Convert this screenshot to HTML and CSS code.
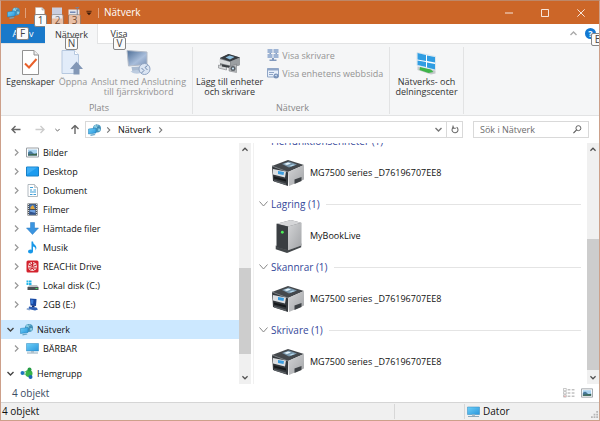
FILE: index.html
```
<!DOCTYPE html>
<html lang="sv">
<head>
<meta charset="utf-8">
<title>Nätverk</title>
<link rel="stylesheet" href="styles.css">
</head>
<body>
<svg class="defs" aria-hidden="true">
  <defs>
    <linearGradient id="g-screen" x1="0" y1="0" x2="1" y2="1"><stop offset="0" stop-color="#6fd0f8"/><stop offset="1" stop-color="#2a96dc"/></linearGradient>
    <linearGradient id="g-side" x1="0" y1="0" x2="1" y2="1"><stop offset="0" stop-color="#d3d4d6"/><stop offset="1" stop-color="#a2a4a7"/></linearGradient>
    <linearGradient id="g-fade" x1="0" y1="0" x2="1" y2="1"><stop offset="0" stop-color="#4c6d96"/><stop offset=".6" stop-color="#a9bedb"/><stop offset="1" stop-color="#7890b4"/></linearGradient>
    <symbol id="net" viewBox="0 0 26 24">
      <circle cx="18" cy="9" r="8" fill="#4795bd"/><path d="M12 4q5-4 9-1l-3 5-5 1zM21 8l4 1-2 6-3-2z" fill="#8dd0e6"/><path d="M17 1l2 6 6 2" stroke="#2a668e" fill="none"/>
      <path d="M1 10l15-2v10L1 20z" fill="url(#g-screen)" stroke="#187bb5"/><path d="M5 21l8-1 2 2-10 2z" fill="#67a6c8"/>
    </symbol>
    <symbol id="printer" viewBox="0 0 34 28">
      <path d="M1 7L17 1l16 5-16 7z" fill="#44484c"/>
      <path d="M1 7l16 6v14L2 22z" fill="#34383c"/>
      <path d="M17 13l16-7v14.500L18 27z" fill="url(#g-side)"/>
      <path d="M11 5l7-2.500 8 3-8 3z" fill="#7795aa"/><path d="M13 5l4-1.500 3 1-4 1.500z" fill="#e4f3fb"/><path d="M18 7l4-1.500 2 .5-4 1.500z" fill="#b9dcf0"/>
      <path d="M1 7l16 6" stroke="#73787c" fill="none"/>
      <path d="M2 10l13 2.500-1 6L2 15.500z" fill="#dcdfe2"/><path d="M7 12l6 1-.5 3L7 15z" fill="#3a9de0"/>
      <path d="M3 17.500l12 3v2l-12-3z" fill="#15181b"/><path d="M3 21l12 3.500V26L3 22.500z" fill="#5c6165"/>
      <path d="M23.500 20.500l7-2.500v4l-7 3z" fill="#3e4246"/>
    </symbol>
    <symbol id="monitor" viewBox="0 0 26 24">
      <path d="M1 2h24v15H1z" fill="url(#g-screen)" stroke="#2a87bf"/><path d="M10 17h6v3h-6z" fill="#a9bcc8"/><path d="M2 20h22v2H2z" fill="#8ca8ba"/>
    </symbol>
    <symbol id="picture" viewBox="0 0 26 20">
      <path d="M1 1h24v18H1z" fill="#fff" stroke="#9a9fa4" stroke-width="2"/><path d="M4 4h18v12H4z" fill="#a9d3f0"/><path d="M4 10q5-5 9 0t9 1v5H4z" fill="#49799a"/><path d="M4 14l18-2v4H4z" fill="#3b654b"/>
    </symbol>
    <symbol id="right" viewBox="0 0 10 14"><path d="M2 1l6 6-6 6" fill="none" stroke="currentColor" stroke-width="2.5"/></symbol>
    <symbol id="down" viewBox="0 0 14 10"><path d="M1 2l6 6 6-6" fill="none" stroke="currentColor" stroke-width="2.8"/></symbol>
    <symbol id="thin" viewBox="0 0 18 12"><path d="M1 1l8 9 8-9" fill="none" stroke="currentColor" stroke-width="2"/></symbol>
    <symbol id="up" viewBox="0 0 14 10"><path d="M1 8l6-6 6 6" fill="none" stroke="currentColor" stroke-width="2.8"/></symbol>
    <symbol id="arrow" viewBox="0 0 20 18"><path d="M19 9H2M9 2L2 9l7 7" fill="none" stroke="currentColor" stroke-width="2.8"/></symbol>
  </defs>
</svg>
<div class="window">
  <header class="titlebar">
    <svg class="app-icon"><use href="#net"/></svg>
    <span class="bar"></span>
    <div class="quick">
      <button class="quick-btn" aria-label="Egenskaper"><svg viewBox="0 0 24 24"><path d="M3 1h13l5 5v17H3z" fill="#fff" stroke="#bbb"/><path d="M16 1v5h5" fill="#ddd" stroke="#888"/></svg><kbd class="tip">1</kbd></button>
      <button class="quick-btn off" aria-label="Ny mapp"><svg viewBox="0 0 24 24"><path d="M2 1h20v22H2z" fill="#c9cee0"/></svg><kbd class="tip">2</kbd></button>
      <button class="quick-btn off" aria-label="Byt namn"><svg viewBox="0 0 24 24"><path d="M1 5h22v11H1z" fill="#e2e5ec"/><path d="M4 9h11v3H4z" fill="#7589b4"/><path d="M15 1h7M18.500 1v17" stroke="#7c7e91" stroke-width="2"/></svg><kbd class="tip">3</kbd></button>
      <button class="quick-more" aria-label="Anpassa"><svg viewBox="0 0 14 14"><path d="M1 3h12" stroke="#3a1a08" stroke-width="2"/><path d="M1 6h12l-6 6z" fill="#3a1a08"/></svg></button>
    </div>
    <span class="bar"></span>
    <h1>Nätverk</h1>
    <div class="controls">
      <button aria-label="Minimera"><svg viewBox="0 0 24 24"><path d="M0 12h24" stroke="#fff" stroke-width="2.500"/></svg></button>
      <button aria-label="Maximera"><svg viewBox="0 0 24 24"><path d="M1.500 1.500h21v21h-21z" fill="none" stroke="#fff" stroke-width="2.500"/></svg></button>
      <button aria-label="Stäng"><svg viewBox="0 0 24 24"><path d="M1 1l22 22M23 1L1 23" stroke="#fff" stroke-width="2.500"/></svg></button>
    </div>
  </header>
  <nav class="tabs">
    <button class="tab file">Arkiv<kbd class="tip tip-file">F</kbd></button>
    <button class="tab active">Nätverk<kbd class="tip tip-tab">N</kbd></button>
    <button class="tab">Visa<kbd class="tip tip-tab">V</kbd></button>
    <button class="fold" aria-label="Minimera menyfliksområdet"><svg><use href="#up"/></svg></button>
    <button class="help" aria-label="Hjälp">?<kbd class="tip tip-help">E</kbd></button>
  </nav>
  <section class="ribbon">
    <div class="group places">
      <div class="tools">
        <button class="tool"><svg viewBox="0 0 34 50"><path d="M1 1h23l9 9v39H1z" fill="#fff" stroke="#929292" stroke-width="2"/><path d="M24 1v9h9" fill="#eee" stroke="#929292" stroke-width="2"/><path d="M6 27l8 8 15-17" fill="none" stroke="#e9602a" stroke-width="4"/></svg><span>Egenskaper</span></button>
        <button class="tool" disabled><svg viewBox="0 0 44 50"><path d="M1 1h25l8 8v38H1z" fill="#e2ecf9" stroke="#b6c8df" stroke-width="2"/><path d="M26 1v8h8" fill="#fff" stroke="#b6c8df" stroke-width="2"/><path d="M30 23l13 15h-7v11H24V38h-7z" fill="#8297b6"/></svg><span>Öppna</span></button>
        <button class="tool" disabled><svg viewBox="0 0 48 50"><path d="M1 1l40 3v25L4 32z" fill="url(#g-fade)" stroke="#b3bbc8" stroke-width="2"/><path d="M10 34l16-1 2 9-16 3z" fill="#aabbd1"/><path d="M8 43q12-6 24 0-10 9-24 0z" fill="#bdcce0"/><circle cx="36" cy="38" r="11" fill="#dbe5f3" stroke="#91a5c3" stroke-width="2"/><path d="M30 36l5 5-5 5M42 31l-5 4 5 5" fill="none" stroke="#7089ad" stroke-width="2"/></svg><span>Anslut med Anslutning<br>till fjärrskrivbord</span></button>
      </div>
      <h2>Plats</h2>
    </div>
    <div class="group network">
      <div class="tools">
        <button class="tool"><svg viewBox="0 0 46 50"><path d="M4 16l17-8 23 7v15L26 36 4 30z" fill="#777b7e"/><path d="M4 16l17-8 23 7-20 8z" fill="#363b40"/><path d="M15 15l8-4 10 3-9 5z" fill="#8fc1e1"/><path d="M25 23l19-8v15l-19 7z" fill="#9b9fa2"/><path d="M3 18l21 6v7L3 26z" fill="#d9dbdc"/><path d="M1 30l16 4v6L1 36z" fill="#d4d6d7" stroke="#696d70"/><path d="M8 29l16 3v4L8 33z" fill="#3a3e41"/><path d="M22 34l15-6v17l-15-3z" fill="#b8bbbd" stroke="#74777a"/><circle cx="30" cy="37" r="5" fill="#5a6066"/><circle cx="30" cy="37" r="2" fill="#d2edff"/></svg><span>Lägg till enheter<br>och skrivare</span></button>
        <div class="links">
          <button disabled><svg viewBox="0 0 24 24"><path d="M1 0h10v8H1zM13 0h10v8H13zM1 10h10v8H1zM13 10h10v8H13z" fill="#9eb4d4"/><path d="M5 8h3v2H5zM17 8h3v2h-3zM10 18h4v3h5v3H5v-3h5z" fill="#8299bd"/></svg>Visa skrivare</button>
          <button disabled><svg viewBox="0 0 24 24"><path d="M1 3h22v17H1z" fill="#e7effa" stroke="#90a6c7" stroke-width="2"/><path d="M1 3h22v4H1zM4 10h10v2H4zM4 14h8v2H4z" fill="#90a6c7"/><circle cx="18" cy="18" r="5" fill="#7892b8"/><path d="M15 17l4-2 1 4z" fill="#d5e4f6"/></svg>Visa enhetens webbsida</button>
        </div>
      </div>
      <h2>Nätverk</h2>
    </div>
    <div class="group center">
      <div class="tools">
        <button class="tool"><svg viewBox="0 0 42 50"><path d="M3 33l36 8v6l-9 2L3 40z" fill="#c5c9cc"/><path d="M8 34l22 5 5 5-10 2-18-6z" fill="#3fb54a"/><path d="M2 5l37 8v27L2 31z" fill="#fff" stroke="#bed2de"/><path d="M3 6l17 4v12L3 19zM22 11l16 3v11l-16-3zM3 21l17 3v10L3 30zM22 25l16 3v11l-16-4z" fill="#309de2"/></svg><span>Nätverks- och<br>delningscenter</span></button>
      </div>
    </div>
  </section>
  <div class="navbar">
    <button class="nav-back" aria-label="Bakåt"><svg><use href="#arrow"/></svg></button>
    <button class="nav-next" aria-label="Framåt" disabled><svg><use href="#arrow"/></svg></button>
    <button class="nav-list" aria-label="Tidigare"><svg><use href="#down"/></svg></button>
    <button class="nav-up" aria-label="Uppåt"><svg><use href="#arrow"/></svg></button>
    <div class="address">
      <svg class="place"><use href="#net"/></svg>
      <svg class="crumb"><use href="#right"/></svg>
      <a href="#">Nätverk</a>
      <svg class="crumb"><use href="#right"/></svg>
      <button class="drop" aria-label="Visa adresser"><svg><use href="#down"/></svg></button>
      <button class="refresh" aria-label="Uppdatera"><svg viewBox="0 0 20 22"><path d="M14 5.500A7.500 7.500 0 1 1 7 5" fill="none" stroke="#686868" stroke-width="2.600"/><path d="M5 1v7h7" fill="none" stroke="#686868" stroke-width="2.600"/></svg></button>
    </div>
    <form class="search">
      <input type="search" aria-label="Sök i Nätverk" placeholder="Sök i Nätverk">
      <button type="button" aria-label="Sök"><svg viewBox="0 0 20 20"><circle cx="12" cy="7" r="5.500" fill="none" stroke="#555" stroke-width="2"/><path d="M8 11l-7 7" stroke="#555" stroke-width="2.500"/></svg></button>
    </form>
  </div>
  <main class="content">
    <ul class="tree">
      <li class="child"><svg class="twist"><use href="#right"/></svg><svg class="ico"><use href="#picture"/></svg>Bilder</li>
      <li class="child"><svg class="twist"><use href="#right"/></svg><svg class="ico" viewBox="0 0 26 24"><path d="M1 3h24v18H1z" fill="#1c9cf0" stroke="#1780c8" stroke-width="2"/><path d="M2 4h20L2 18z" fill="#3eaef6"/></svg>Desktop</li>
      <li class="child"><svg class="twist"><use href="#right"/></svg><svg class="ico" viewBox="0 0 26 26"><path d="M4 1h13l6 6v18H4z" fill="#fff" stroke="#9aa4ac" stroke-width="1.500"/><path d="M17 1v6h6" fill="#ddd" stroke="#9aa4ac"/><path d="M8 6h6v2H8zM8 11h4v2H8zM15 11h5v2h-5zM8 15h12v2H8zM8 20h5v2H8zM15 20h5v2h-5z" fill="#3f9fd8"/></svg>Dokument</li>
      <li class="child"><svg class="twist"><use href="#right"/></svg><svg class="ico" viewBox="0 0 26 26"><path d="M3 1h20v24H3z" fill="#4b4e52"/><path d="M7 3h12v9H7z" fill="#3f75bd"/><path d="M7 14h12v9H7z" fill="#6fa0df"/><path d="M9 8l5-4 4 8H9z" fill="#e1a53a"/><path d="M7 17l12 3v3H7z" fill="#30518b"/><path d="M5 2v22M21 2v22" stroke="#d4d7da" stroke-width="2" stroke-dasharray="2 2"/></svg>Filmer</li>
      <li class="child"><svg class="twist"><use href="#right"/></svg><svg class="ico" viewBox="0 0 26 26"><path d="M9 1h8v11h8L13 25 1 12h8z" fill="#3b95e0" stroke="#287bc2"/></svg>Hämtade filer</li>
      <li class="child"><svg class="twist"><use href="#right"/></svg><svg class="ico" viewBox="0 0 26 26"><ellipse cx="9" cy="21" rx="5" ry="4" fill="#1898e8"/><path d="M11 1h3q0 4 4 7 5 5 1 11 1-7-5-8v10h-3z" fill="#1898e8"/></svg>Musik</li>
      <li class="child"><svg class="twist"><use href="#right"/></svg><svg class="ico" viewBox="0 0 26 26"><rect x="1" y="1" width="24" height="24" rx="3" fill="#d3222d"/><circle cx="13" cy="13" r="9" fill="#f5d5d4"/><path d="M13 4v9l-8-3M13 13l8-3M5 16h16M9 20l3-4 5 5M8 7l4 3 5-4" fill="none" stroke="#c9202b" stroke-width="2"/></svg>REACHit Drive</li>
      <li class="child"><svg class="twist"><use href="#right"/></svg><svg class="ico" viewBox="0 0 26 26"><path d="M1 3h4v4H1zM6 3h5v4H6zM1 8h4v4H1zM6 8h5v4H6z" fill="#20b4e8"/><path d="M3 16l4-4h15l3 4z" fill="#bdc1c4"/><path d="M3 16h22v6H3z" fill="#4c5155"/><path d="M19 18h4v2h-4z" fill="#45dd5d"/></svg>Lokal disk (C:)</li>
      <li class="child"><svg class="twist"><use href="#right"/></svg><svg class="ico" viewBox="0 0 26 26"><path d="M8 1l13 1-1 14-11-1z" fill="#1747a0"/><path d="M10 3l5 1-1 8-4-1z" fill="#397bd6"/><path d="M12 15h5v4h-5z" fill="#162f6d"/><path d="M6 17l15 2 3 4-6 2-13-3z" fill="#2e5fb4"/><path d="M2 20l7 2-2 3-6-2z" fill="#8ba6ce"/></svg>2GB (E:)</li>
      <li class="root selected"><svg class="twist open"><use href="#down"/></svg><svg class="ico"><use href="#net"/></svg>Nätverk</li>
      <li class="child"><svg class="twist"><use href="#right"/></svg><svg class="ico"><use href="#monitor"/></svg>BÄRBAR</li>
      <li class="root home"><svg class="twist open"><use href="#down"/></svg><svg class="ico" viewBox="0 0 26 26"><path d="M5 12l14-7v15z" fill="none" stroke="#7bbd8a" stroke-width="2"/><circle cx="5" cy="12" r="4" fill="#1d75be"/><circle cx="18" cy="13" r="7" fill="#38b449"/><circle cx="19" cy="5" r="4" fill="#249c43"/><circle cx="21" cy="20" r="4" fill="#1c68b5"/></svg>Hemgrupp</li>
    </ul>
    <div class="scrollbar tree-scroll"><button aria-label="Upp"><svg><use href="#up"/></svg></button><span class="before"></span><span class="thumb"></span><span class="after"></span><button aria-label="Ned"><svg><use href="#down"/></svg></button></div>
    <div class="files">
      <div class="list">
        <h3><svg><use href="#thin"/></svg>Flerfunktionsenheter (1)</h3>
        <div class="item"><svg><use href="#printer"/></svg>MG7500 series _D76196707EE8</div>
        <h3><svg><use href="#thin"/></svg>Lagring (1)</h3>
        <div class="item"><svg viewBox="0 0 34 36"><path d="M4 28l12 4 15-6v4l-15 6-12-4z" fill="#43474a"/><path d="M5 5L20 1l11 3v24l-14 5-12-3z" fill="#707376"/><path d="M5 5L20 1l11 3-14 4z" fill="#d5d6d8"/><path d="M17 8l14-4v24l-14 5z" fill="url(#g-side)"/><path d="M5 5l12 3v25L5 30z" fill="#3a3e42"/><circle cx="11" cy="14" r="1.500" fill="#4cee57"/></svg>MyBookLive</div>
        <h3><svg><use href="#thin"/></svg>Skannrar (1)</h3>
        <div class="item"><svg><use href="#printer"/></svg>MG7500 series _D76196707EE8</div>
        <h3><svg><use href="#thin"/></svg>Skrivare (1)</h3>
        <div class="item"><svg><use href="#printer"/></svg>MG7500 series _D76196707EE8</div>
      </div>
    </div>
    <div class="scrollbar file-scroll"><button aria-label="Upp"><svg><use href="#up"/></svg></button><span class="before"></span><span class="thumb"></span><span class="after"></span><button aria-label="Ned"><svg><use href="#down"/></svg></button></div>
  </main>
  <div class="details">
    <span>4 objekt</span>
    <div class="views">
      <button aria-label="Detaljer"><svg viewBox="0 0 26 22"><path d="M1 1h6v5H1zM1 8h6v5H1zM1 15h6v5H1z" fill="#fff" stroke="#858585"/><path d="M3 17h2v2H3z" fill="#d55"/><path d="M10 4h6M19 4h6M10 11h6M19 11h6M10 18h6M19 18h6" stroke="#777" stroke-width="1.500"/></svg></button>
      <button aria-label="Stora ikoner"><svg><use href="#picture"/></svg></button>
    </div>
  </div>
  <footer class="status">
    <span class="count">4 objekt</span>
    <span class="blank"></span>
    <span class="zone"><svg><use href="#monitor"/></svg>Dator</span>
    <svg class="grip" viewBox="0 0 8 8"><path d="M6 0h2v2H6zM3 3h2v2H3zM6 3h2v2H6zM0 6h2v2H0zM3 6h2v2H3zM6 6h2v2H6z" fill="#b5b5b5"/></svg>
  </footer>
</div>
</body>
</html>
```
FILE: styles.css
```
* { box-sizing: border-box; }
body { margin: 0; background: #fff; color: #111; font: 9px/11px "Open Sans", "Noto Sans", sans-serif; }
button { padding: 0; border: 0; background: none; color: inherit; font: inherit; }
h1, h2, h3, ul { margin: 0; padding: 0; font: inherit; list-style: none; }
svg { display: block; flex: none; }
.defs { position: absolute; width: 0; height: 0; }
.window { display: flex; flex-direction: column; min-height: 100vh; overflow: hidden; border: 1px solid #cda08a; border-top-color: #bd8768; }

.titlebar { display: flex; align-items: center; height: 23px; padding-left: 6px; background: #cc6628; color: #fff; }
.app-icon { width: 13px; height: 12px; }
.bar { width: 1px; height: 10px; margin: 0 5px; background: #e0a27e; }
.quick { display: flex; align-items: center; gap: 5px; margin-left: 3px; }
.quick-btn { position: relative; width: 12px; height: 12px; }
.quick-btn svg { width: 12px; height: 12px; }
.quick-more { width: 6px; margin: 0 1px; }
.quick-more svg { width: 6px; height: 6px; }
.titlebar h1 { font-size: 10px; }
.controls { display: flex; margin-left: auto; }
.controls button { display: grid; place-items: center; width: 36px; height: 23px; }
.controls svg { width: 8px; height: 8px; }

.tip { position: absolute; top: 7px; left: 0; z-index: 1; display: grid; place-items: center; width: 13px; height: 13px; border: 1px solid #858585; border-radius: 2px; background: #fbfbfb; color: #444; font: 10px/11px "Open Sans", "Noto Sans", sans-serif; }
.off .tip { opacity: .6; }
.tip-file { top: 3px; left: 15px; }
.tip-tab { top: 13px; left: 50%; margin-left: -6px; }
.tip-help { top: 5px; left: 6px; }

.tabs { display: flex; align-items: stretch; height: 19px; }
.tab { position: relative; padding: 0 10px; color: #333; }
.tab.file { width: 44px; background: #1979ca; color: #fff; }
.tab.active { width: 53px; margin-bottom: -1px; border-right: 1px solid #e3e4e5; background: #f5f6f7; z-index: 1; }
.tab:nth-child(3) { width: 42px; }
.fold { margin-left: auto; color: #aaa; }
.fold svg { width: 7px; height: 5px; }
.help { position: relative; align-self: center; width: 11px; height: 11px; margin: 0 3px 0 8px; border-radius: 50%; background: #1278d2; color: #fff; font-weight: bold; }

.ribbon { display: flex; height: 73px; padding-top: 3px; border: solid #e2e3e4; border-width: 1px 0; background: #f5f6f7; }
.group { display: flex; flex-direction: column; height: 67px; border-right: 1px solid #e2e3e4; }
.group h2 { margin-top: auto; color: #888; line-height: 12px; text-align: center; }
.places { width: 192px; padding-left: 5px; }
.network { width: 197px; padding-left: 3px; }
.center { width: 74px; }
.tools { display: flex; gap: 4px; }
.tool { display: flex; flex-direction: column; align-items: center; gap: 2px; margin-top: 3px; color: #333; line-height: 10px; white-space: nowrap; }
.tool svg { width: 25px; height: 25px; }
.tool:disabled, .links button:disabled { color: #949494; }
.center .tools { justify-content: center; }
.links { display: flex; flex-direction: column; gap: 6px; padding-top: 2px; }
.links button { display: flex; align-items: center; gap: 3px; height: 12px; white-space: nowrap; }
.links svg { width: 12px; height: 12px; }

.navbar { display: flex; align-items: center; height: 27px; padding: 0 10px; color: #666; }
.navbar > button svg { width: 10px; height: 9px; }
.nav-next { margin-left: 14px; color: #ccc; transform: scaleX(-1); }
.nav-list { margin: 0 10px; }
.navbar > .nav-list svg { width: 5px; height: 4px; }
.nav-up { transform: rotate(90deg); }
.address { display: flex; flex: 1; align-items: center; height: 17px; margin: 0 10px 0 5px; padding-left: 2px; border: 1px solid #d9d9d9; color: #777; }
.place { width: 13px; height: 12px; margin-right: 5px; }
.crumb { width: 5px; height: 6px; }
.address a { margin: 0 7px; color: #111; text-decoration: none; }
.drop { margin-left: auto; padding: 0 4px; }
.drop svg { width: 7px; height: 5px; }
.refresh { display: grid; place-items: center; width: 16px; height: 15px; border-left: 1px solid #d9d9d9; }
.refresh svg { width: 8px; height: 9px; }
.search { display: flex; align-items: center; width: 116px; height: 17px; padding: 0 6px; border: 1px solid #d9d9d9; }
.search input { flex: 1; min-width: 0; padding: 0; border: 0; outline: 0; background: none; font: inherit; }
.search input::placeholder { color: #6d6d6d; opacity: 1; }
.search svg { width: 9px; height: 9px; }

.content { display: flex; flex: 1; min-height: 0; }
.tree { flex: 0 0 238px; }
.tree li { display: flex; align-items: center; height: 19px; padding-left: 13px; white-space: nowrap; }
.tree .root { padding-left: 6px; }
.tree .selected { margin-top: 6px; background: #cce8ff; }
.tree .home { margin-top: 6px; }
.twist { width: 5px; height: 7px; margin-right: 7px; color: #999; }
.twist.open { width: 7px; height: 5px; margin-right: 6px; color: #444; }
.ico { width: 13px; height: 13px; margin-right: 4px; }
.scrollbar { display: flex; flex-direction: column; flex: 0 0 12px; background: #f0f0f0; }
.scrollbar button { display: grid; place-items: center; height: 13px; color: #505050; }
.scrollbar svg { width: 6px; height: 5px; }
.thumb { background: #cdcdcd; }
.tree-scroll .before { flex: 112; }
.tree-scroll .thumb { flex: 86; }
.tree-scroll .after { flex: 17; }
.file-scroll .before { flex: 83; }
.file-scroll .thumb { flex: 131; }
.file-scroll .after { flex: 1; }
.files { flex: 1; min-width: 0; overflow: hidden; margin-left: 2px; padding: 0 6px 0 5px; border-left: 1px solid #f1f1f1; }
.list { margin-top: -12px; }
.list h3 { display: flex; align-items: center; height: 20px; color: #35479a; font-size: 10px; }
.list h3 svg { width: 9px; height: 6px; margin-right: 3px; color: #888; }
.list h3::after { content: ""; flex: 1; height: 1px; margin-left: 6px; background: #e4e4e4; }
.item { display: flex; align-items: center; gap: 5px; height: 43px; padding-left: 12px; }
.item svg { width: 34px; height: 34px; }

.details { display: flex; align-items: center; justify-content: space-between; height: 18px; padding: 0 6px 0 11px; color: #3b4a63; font-size: 10px; }
.views { display: flex; gap: 6px; }
.views svg { width: 12px; height: 10px; }
.status { display: flex; align-items: center; height: 18px; border-top: 1px solid #d5d5d5; background: #f0f0f0; font-size: 10px; }
.count { flex: 1; padding-left: 1px; }
.blank, .zone { height: 15px; border-left: 1px solid #d7d7d7; }
.blank { width: 70px; }
.zone { display: flex; align-items: center; gap: 3px; width: 127px; padding-left: 2px; }
.zone svg { width: 13px; height: 12px; }
.grip { width: 7px; height: 7px; margin: 6px 1px 0 0; }
```
